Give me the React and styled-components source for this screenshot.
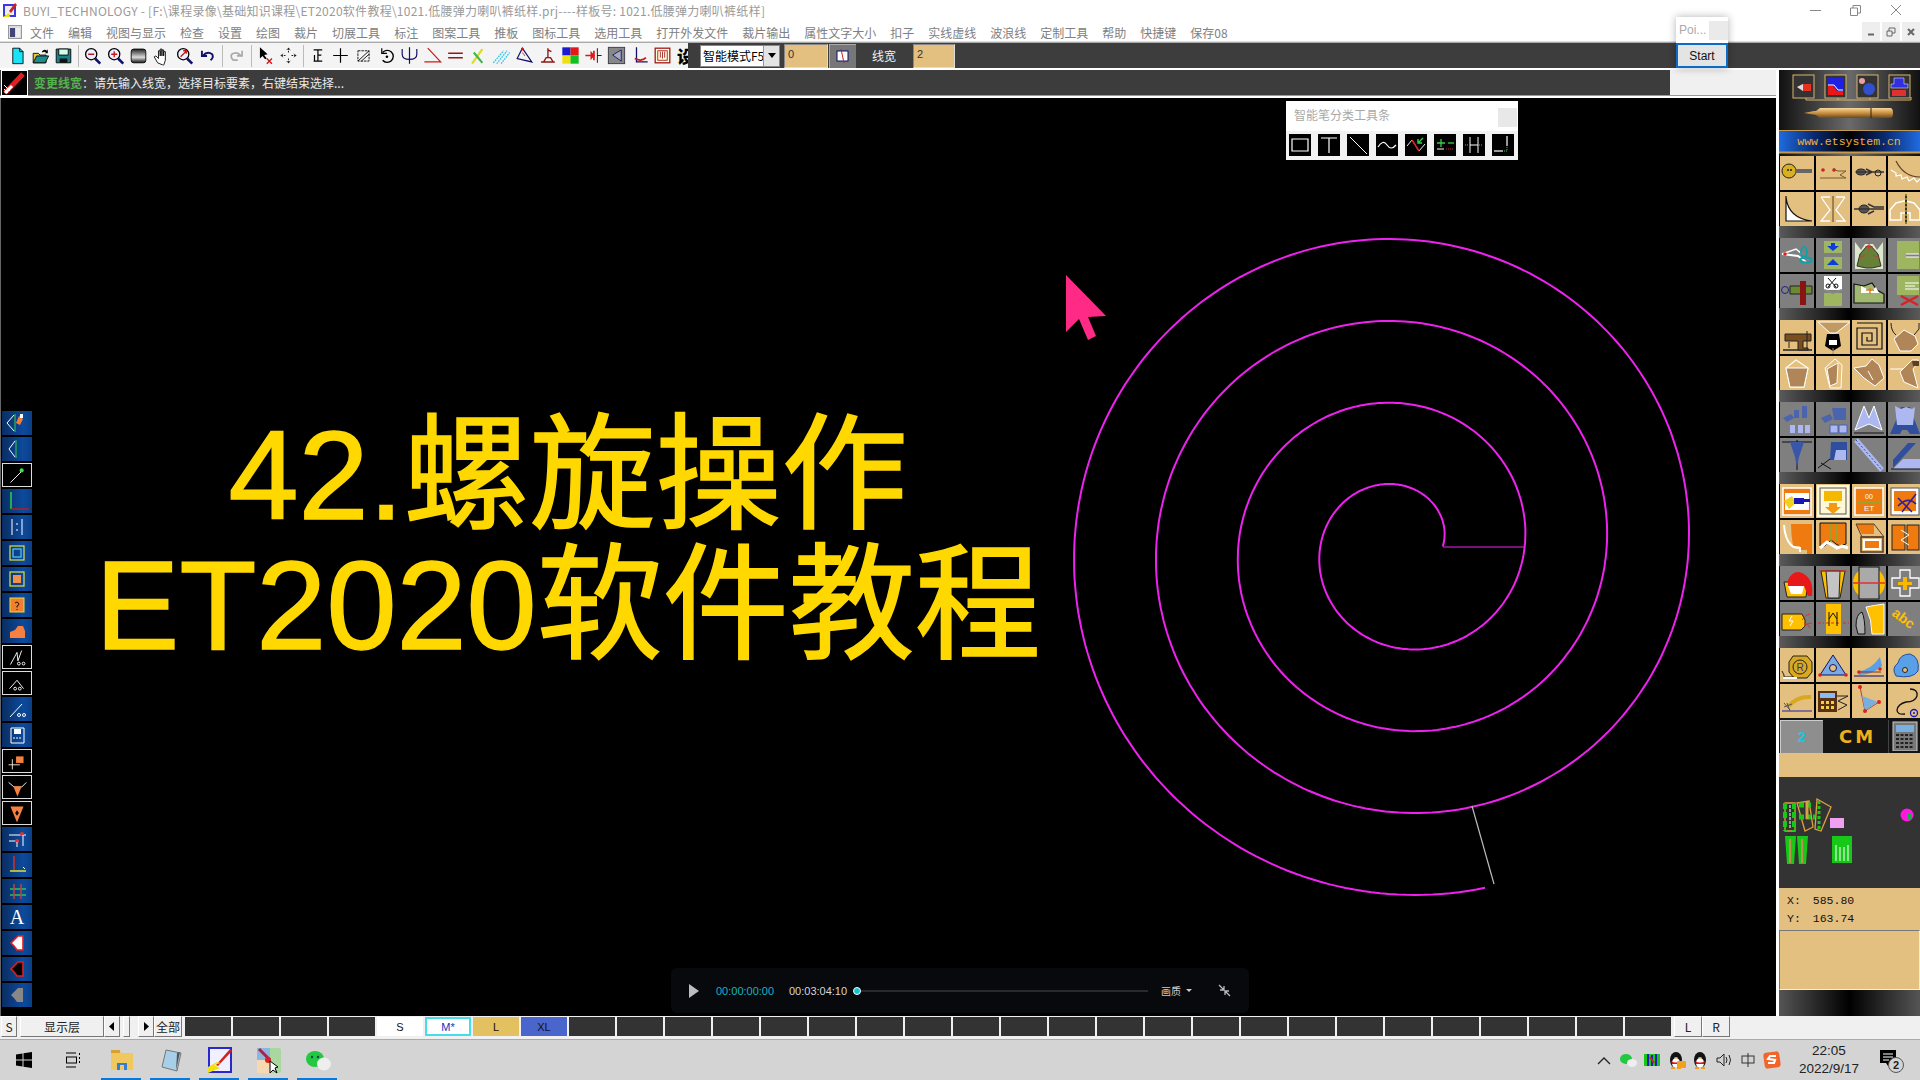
import React from 'react'
import styled, { createGlobalStyle } from 'styled-components'

const Global = createGlobalStyle`
  html, body { margin: 0; padding: 0; background: #f0f0f0; overflow: hidden; }
  * { box-sizing: border-box; }
`
const cjk = `"Noto Sans CJK SC", "Liberation Sans", sans-serif`
const tan = '#e3bf80'

const Page = styled.div`
  width: 1920px; height: 1080px; display: flex; flex-direction: column;
  position: relative; overflow: hidden; font-family: ${cjk}; background: #f0f0f0;
`
const TitleBar = styled.div`
  height: 22px; background: #fff; display: flex; align-items: center;
  padding: 0 0 2px 2px; color: #9a9a9a; font-size: 12px; gap: 5px; white-space: nowrap; letter-spacing: .26px;
`
const WindowButtons = styled.div`
  margin-left: auto; display: flex; width: 130px; height: 22px; align-items: center;
  justify-content: space-between; padding: 0 18px 0 20px;
`
const MenuBar = styled.div`
  height: 20px; background: #fff; display: flex; align-items: center; padding-left: 8px;
`
const MenuList = styled.div`
  display: flex; gap: 14px; margin-left: 8px; font-size: 12px; color: #808080; white-space: nowrap;
`
const MdiButtons = styled.div`
  margin-left: auto; display: flex; gap: 2px; height: 20px;
`
const MdiButton = styled.div`
  width: 18px; height: 20px; background: #eee; display: flex; align-items: center; justify-content: center;
`
const Toolbar = styled.div`
  height: 28px; display: flex; background: #f3f3f3; border-top: 1px solid #aaa; border-bottom: 2px solid #fff;
  box-shadow: 0 -1px 0 #ddd;
`
const ToolIcons = styled.div`
  width: 688px; display: flex; align-items: center; padding-left: 6px; background: #f4f4f4;
`
const ToolIcon = styled.div`
  width: 23px; height: 23px; flex: none; display: flex; align-items: center; justify-content: center;
  svg { transform: scale(.86); }
`
const ToolSep = styled.div`
  width: 6px; height: 22px; flex: none;
  &::after { content: ''; display: block; width: 1px; height: 22px; margin-left: 3px; background: #bbb; }
`
const BigGlyph = styled.span`
  font-size: 17px; font-weight: 900; color: #000; line-height: 1;
`
const DarkTools = styled.div`
  flex: 1; background: #3d3d3d; display: flex; align-items: center; padding-left: 0; color: #eee; font-size: 12px;
`
const Combo = styled.div`
  width: 80px; height: 22px; background: #fff; color: #000; font-size: 12px; display: flex; align-items: center;
  padding-left: 2px; margin-left: 12px; position: relative; white-space: nowrap; overflow: hidden;
  border: 1px solid #888;
`
const ComboArrow = styled.div`
  position: absolute; right: 0; top: 0; width: 16px; height: 20px; background: #e4e4e4; border-left: 1px solid #999;
  display: flex; align-items: center; justify-content: center;
  &::after { content: ''; border: 4px solid transparent; border-top: 5px solid #000; margin-top: 4px; }
`
const TanInput = styled.div`
  width: ${p => p.$w}px; height: 24px; background: ${tan}; border: 1px solid #999; border-color: #888 #ddd #ddd #888; color: #333;
  font-size: 11px; padding: 2px 3px; margin-left: ${p => p.$ml}px; line-height: 14px; font-family: "Liberation Sans", sans-serif;
`
const GrayToggle = styled.div`
  width: 27px; height: 24px; background: #777; margin-left: 1px; border-top: 1px solid #aaa; border-left: 1px solid #aaa; display: flex; align-items: center; justify-content: center;
`
const WidthLabel = styled.div`
  margin-left: 16px; width: 41px; font-size: 12px; color: #f2f2f2;
`
const Body = styled.div`
  height: 946px; display: flex;
`
const Work = styled.div`
  width: 1777px; display: flex; flex-direction: column; border-right: 1px solid #fff;
`
const StatusBar = styled.div`
  height: 28px; display: flex; align-items: stretch; background: #f0f0f0; border-bottom: 2px solid #fff;
  box-shadow: inset 0 -1px 0 #999;
`
const StatusDark = styled.div`
  width: 1670px; background: #3c3c3c; display: flex; align-items: center; font-size: 12px; color: #eaeaea;
  margin-bottom: 1px;
`
const StatusIcon = styled.div`
  width: 27px; height: 26px; margin: 0 6px 0 1px; background: #000; border: 1px solid #fff; flex: none;
  display: flex;
`
const StatusKey = styled.span`
  color: #54b24f; font-weight: 700;
`
const Canvas = styled.div`
  flex: 1; background: #000; position: relative; display: flex; align-items: flex-end;
  border-left: 1px solid #666; padding: 0 0 9px 1px;
`
const LeftStrip = styled.div`
  display: flex; flex-direction: column; gap: 2px; width: 30px; position: relative;
`
const StripButton = styled.div`
  width: 30px; height: 24px; display: flex;
  background: ${p => p.$black ? '#000' : 'linear-gradient(90deg,#0a2d62,#0c4a9c 70%,#0b3f86)'};
  border: ${p => p.$black ? '1px solid #ddd' : 'none'};
`
const SpiralLayer = styled.svg`
  position: absolute; left: 0; top: 0; width: 1776px; height: 918px;
`
const Headline = styled.div`
  position: absolute; left: 0; top: 313px; width: 1134px; text-align: center; color: #ffd800;
  font-family: "Liberation Sans", "Noto Sans CJK SC", sans-serif; font-size: 126px; line-height: 130px;
  white-space: nowrap; -webkit-text-stroke: 1.5px #ffd800;
`
const PenPanel = styled.div`
  position: absolute; left: 1285px; top: 3px; width: 232px; height: 59px; background: #f2f2f2;
`
const PenTitle = styled.div`
  height: 30px; background: #fff; color: #a9a9a9; font-size: 12px; display: flex; align-items: center; padding: 0 0 3px 8px; position: relative;
`
const PenClose = styled.div`
  position: absolute; right: 1px; top: 7px; width: 19px; height: 19px; background: #e8e8e8;
`
const PenTools = styled.div`
  display: flex; gap: 7px; padding: 3px 0 0 3px;
`
const PenTool = styled.div`
  width: 22px; height: 22px; background: #000; display: flex;
`
const Player = styled.div`
  position: absolute; left: 670px; top: 870px; width: 578px; height: 45px; background: #08090c; border-radius: 6px;
  display: flex; align-items: center; padding-left: 18px; font-size: 11px; color: #d5d5d5; font-family: "Liberation Sans", sans-serif;
`
const PlayTriangle = styled.div`
  width: 0; height: 0; border-left: 10px solid #bdbdbd; border-top: 7px solid transparent; border-bottom: 7px solid transparent;
`
const TimeNow = styled.span`
  color: #12b4c2; margin-left: 17px; width: 73px;
`
const TimeAll = styled.span`
  width: 57px; white-space: nowrap;
`
const Knob = styled.div`
  width: 8px; height: 8px; border-radius: 50%; background: #12c3d0; border: 1.5px solid #fff; flex: none; margin-left: 7px;
`
const Track = styled.div`
  width: 287px; height: 2px; background: #2a2a2a;
`
const Quality = styled.span`
  margin-left: 13px; font-family: ${cjk}; font-size: 10px; color: #ccc;
`
const Caret = styled.div`
  margin-left: 5px; border: 3px solid transparent; border-top: 3px solid #ccc; margin-top: 3px;
`
const Panel = styled.div`
  width: 143px; background: #000; overflow: hidden; display: flex; flex-direction: column; border-left: 2px solid #fff; padding-left: 0;
`
const PanelHead = styled.div`
  height: 86px; flex: none; background: linear-gradient(90deg,#111,#6a6a6a 50%,#111);
  display: flex; flex-direction: column;
`
const Band = styled.div`
  height: 12px; flex: none; background: linear-gradient(90deg,#5a5a5a,#000 50%,#5a5a5a);
`
const IconGrid = styled.div`
  display: grid; grid-template-columns: repeat(4, 34px); grid-auto-rows: 34px; gap: 2px; padding-left: 1px; height: 70px; flex: none; background: #000;
`
const IconCell = styled.div`
  background: ${p => p.$tone === 'gray' ? '#7f7f7f' : tan}; display: flex;
`
const BottomRow = styled.div`
  height: 35px; flex: none; display: flex; padding: 2px 0 0 1px; background: #141414;
`
const UnitKey = styled.div`
  width: 43px; background: #8e8e8e; color: #19c7e0; border: 1px solid #ccc; border-bottom: 0; border-right: 0;
  font-size: 14px; font-weight: 700; display: flex; align-items: center; justify-content: center; font-family: "Liberation Sans", sans-serif;
`
const UnitName = styled.div`
  width: 66px; color: #f0b01c; font-family: "DejaVu Sans", sans-serif; font-size: 18px; font-weight: 700; letter-spacing: 3px; border-right: 1px solid #444;
  display: flex; align-items: center; justify-content: center; padding-left: 4px;
`
const Calc = styled.div`
  width: 30px; padding-left: 3px; display: flex;
`
const TanBand = styled.div`
  height: 24px; flex: none; background: ${tan};
`
const Preview = styled.div`
  height: 111px; flex: none; background: #333; display: flex;
`
const Coords = styled.div`
  height: 42px; flex: none; background: ${tan}; padding: 4px 0 0 8px; font-family: "Liberation Mono", monospace; font-size: 11.5px; line-height: 18px; color: #111;
`
const CoordRow = styled.div`
  display: flex; gap: 12px;
`
const Inset = styled.div`
  height: 60px; flex: none; background: ${tan}; border: 1px solid; border-color: #777 #eee #eee #777;
`
const PanelFoot = styled.div`
  flex: 1; background: linear-gradient(90deg,#555,#000 50%,#555);
`
const LayerBar = styled.div`
  height: 22px; display: flex; align-items: stretch; padding: 0 0 1px 1px; background: #f0f0f0; font-size: 12px;
`
const LayerButton = styled.div`
  width: ${p => p.$w}px; margin-left: ${p => p.$ml || 0}px; border: 1px solid; border-color: #fff #777 #777 #fff; background: #f0f0f0; color: #222;
  display: flex; align-items: center; justify-content: center; flex: none;
`
const SizeCells = styled.div`
  display: flex; gap: 2px; margin-left: 3px; padding: 1px 0;
`
const SizeCell = styled.div`
  width: 46px; background: ${p => p.$bg || '#333'}; color: ${p => p.$fg || '#111'}; font-size: 11px;
  border: ${p => p.$outline ? '2px solid #46dcec' : 'none'};
  display: flex; align-items: center; justify-content: center; font-family: "Liberation Sans", sans-serif;
`
const Taskbar = styled.div`
  height: 41px; margin-top: 1px; border-top: 1px solid #aaa; background: #d4d4d4; display: flex; position: relative; align-items: center;
`
const TaskSlot = styled.div`
  width: ${p => p.$w || 49}px; height: 40px; display: flex; align-items: center; justify-content: center; flex: none; position: relative;
  ${p => p.$open ? `&::after { content: ''; position: absolute; left: 4px; right: 5px; bottom: 0; height: 2px; background: #0a78d4; }` : ''}
`
const Tray = styled.div`
  margin-left: auto; display: flex; align-items: center; height: 40px;
`
const TrayIcon = styled.div`
  width: 24px; display: flex; justify-content: center; align-items: center;
`
const Clock = styled.div`
  width: 78px; margin-left: 6px; text-align: center; font-size: 13.5px; line-height: 18px; color: #222; font-family: "Liberation Sans", sans-serif;
`
const Notify = styled.div`
  width: 34px; margin: 0 13px 0 5px; height: 30px; display: flex;
`
const PoiBox = styled.div`
  position: absolute; left: 1676px; top: 17px; width: 52px; height: 51px; background: #fff; box-shadow: 0 0 8px rgba(0,0,0,.3); z-index: 3;
  display: flex; flex-direction: column;
`
const PoiTitle = styled.div`
  height: 26px; display: flex; align-items: center; padding-left: 3px; font-size: 12px; color: #aaa; font-family: "Liberation Sans", sans-serif; justify-content: space-between;
`
const PoiClose = styled.div`
  width: 19px; height: 19px; background: #eaeaea;
`
const StartButton = styled.div`
  flex: 1; border: 2px solid #0a6cc4; background: #e4e4e4; font-size: 12px; color: #111; display: flex; align-items: center; justify-content: center; font-family: "Liberation Sans", sans-serif;
`

const menus = ['文件','编辑','视图与显示','检查','设置','绘图','裁片','切展工具','标注','图案工具','推板','图标工具','选用工具','打开外发文件','裁片输出','属性文字大小','扣子','实线虚线','波浪线','定制工具','帮助','快捷键','保存08']

const Svg = ({ s = 34, w, h, children }) => (
  <svg width={w || s} height={h || s} viewBox={`0 0 ${w || s} ${h || s}`} fill="none" style={{ display: 'block' }}>{children}</svg>
)

const Mag = ({ sign }) => (
  <Svg s={23}>
    <circle cx="10" cy="10" r="6.5" fill="#eef" stroke="#000" strokeWidth="1.5" />
    <path d="M14.5 15l6 6" stroke="#11116a" strokeWidth="3" />
    <path d={sign === '+' ? 'M6.5 10h7M10 6.5v7' : sign === '-' ? 'M6.5 10h7' : 'M7 13l6-6M10 6h3.5v3.5'} stroke="#c01818" strokeWidth="1.6" />
  </Svg>
)

const toolIcons = [
  <Svg s={23}><path d="M6 3h8l4 4v14H6z" fill="#19e3f5" stroke="#000" /><path d="M14 3v4h4" stroke="#000" /></Svg>,
  <Svg s={23}><path d="M3 9h6l2 2h7v9H3z" fill="#e9c74a" stroke="#000" /><path d="M3 20l4-8h14l-4 8z" fill="#1f8c8c" stroke="#000" /><path d="M13 7q3-4 6-1l1-2v5h-4l2-1q-2-2-4 0" fill="#000" /></Svg>,
  <Svg s={23}><path d="M3 4h17v16H3z" fill="#1c7f86" stroke="#000" /><path d="M6 4h11v7H6z" fill="#cfe" stroke="#000" /><path d="M7 15h9v5H7z" fill="#111" /></Svg>,
  'sep',
  <Mag sign="-" />, <Mag sign="+" />,
  <Svg s={23}><defs><linearGradient id="gr" x1="0" y1="0" x2="0" y2="1"><stop offset="0" stopColor="#222" /><stop offset=".6" stopColor="#ddd" /><stop offset="1" stopColor="#111" /></linearGradient></defs><rect x="3" y="4" width="17" height="16" rx="3" fill="url(#gr)" stroke="#000" /></Svg>,
  <Svg s={23}><path d="M7 20l-4-7 2-1 3 3V6l2 0v6-8h2v8-7h2v7-5h2v10l-2 6z" fill="#fff" stroke="#000" strokeWidth="1" /></Svg>,
  <Mag sign="a" />,
  <Svg s={23}><path d="M5 6v6h6" stroke="#11116a" strokeWidth="2.2" /><path d="M6 12q5-6 11-2 2 4-2 7" stroke="#11116a" strokeWidth="2.2" /></Svg>,
  'sep',
  <Svg s={23}><path d="M18 6v6h-6" stroke="#aaa" strokeWidth="2" /><path d="M17 12q-5-6-11-2-2 4 2 7h5" stroke="#aaa" strokeWidth="2" /></Svg>,
  'sep',
  <Svg s={23}><path d="M5 2l0 13 3-3 3 4 2-1-3-4 4-1z" fill="#000" /><path d="M13 15l6 6M19 15l-6 6" stroke="#d01818" strokeWidth="1.6" /></Svg>,
  <Svg s={23}><path d="M11.5 3v5M11.5 15v5M3 11.5h5M15 11.5h5" stroke="#000" strokeDasharray="2 1" /><path d="M9.5 5l2-2 2 2M9.5 18l2 2 2-2M5 9.5l-2 2 2 2M18 9.5l2 2-2 2" stroke="#000" /></Svg>,
  'sep',
  <Svg s={23}><path d="M7 5h10M12 5v13M7 18h10M12 11h4M8 11v7" stroke="#000" strokeWidth="1.4" /></Svg>,
  <Svg s={23}><path d="M11.5 3v17M3 11.5h17" stroke="#000" strokeWidth="1.4" /></Svg>,
  <Svg s={23}><path d="M5 6h13v12H5z" stroke="#000" strokeDasharray="3 1" /><path d="M5 18L18 6M9 18l9-8" stroke="#000" /></Svg>,
  <Svg s={23}><path d="M7 8a7 7 0 1 1 0 9" stroke="#000" strokeWidth="1.6" /><path d="M6 3v6h6" stroke="#000" strokeWidth="1.4" /><circle cx="12" cy="13" r="1.5" fill="#000" /></Svg>,
  <Svg s={23}><path d="M11.5 2v19M3 4v6q0 6 8.500 6 8.500 0 8.500-6V4" stroke="#11116a" strokeWidth="1.4" /></Svg>,
  <Svg s={23}><path d="M2 19h19L6 3" stroke="#d01818" strokeWidth="1.4" /></Svg>,
  <Svg s={23}><path d="M3 9h17M3 14h17" stroke="#8b1a1a" strokeWidth="1.8" /></Svg>,
  <Svg s={23}><path d="M4 21L16 4" stroke="#dddd20" strokeWidth="2.6" /><path d="M6 8l10 12" stroke="#39b54a" strokeWidth="2.4" /></Svg>,
  <Svg s={23}><path d="M2 20L14 6M6 21L18 6M11 21L21 8" stroke="#38c6ea" strokeWidth="1.6" strokeDasharray="2 1" /></Svg>,
  <Svg s={23}><path d="M9 3l11 16-17-4z" stroke="#11116a" strokeWidth="1.4" /><circle cx="9" cy="4" r="1.6" fill="#d01818" /><path d="M9 8l3 4" stroke="#d01818" /></Svg>,
  <Svg s={23}><path d="M4 19h16M7 19l3-5h5l3 5M12 3v11M12 5l4 2" stroke="#8b1a1a" strokeWidth="1.6" /></Svg>,
  <Svg s={23}><rect x="2" y="2" width="9.500" height="9.500" fill="#1a1ad0" /><rect x="11.500" y="2" width="9.500" height="9.500" fill="#e01818" /><rect x="2" y="11.500" width="9.500" height="9.500" fill="#f0e010" /><rect x="11.500" y="11.500" width="9.500" height="9.500" fill="#10c020" /></Svg>,
  <Svg s={23}><path d="M2 11.500h10M12 6v11" stroke="#e01818" strokeWidth="2" /><path d="M8 6l5 5.500-5 5.500z" fill="#e01818" /><path d="M16 3v17M16 11.500h5" stroke="#000" /></Svg>,
  <Svg s={23}><rect x="2" y="2" width="19" height="19" fill="#888" stroke="#334" /><path d="M17 5v13L7 11z" stroke="#11116a" fill="#aab" /></Svg>,
  <Svg s={23}><path d="M8 2v17h13" stroke="#11116a" strokeWidth="1.5" /><path d="M6 15q8 4 13-1" stroke="#d01818" strokeWidth="2" /></Svg>,
  <Svg s={23}><rect x="3" y="3" width="17" height="17" fill="#ffd" stroke="#a01818" strokeWidth="1.5" /><rect x="6" y="6" width="11" height="11" stroke="#a01818" /><path d="M9 7v7M11.500 7v8M14 7v7" stroke="#a01818" /></Svg>,
  'big',
]

const leftIcons = [
  [<path d="M12 4L5 12l7 8" stroke="#fff" />, <path d="M13 3v18" stroke="#2fd14a" />, <path d="M17 5l4 3-3 6-4-2z" fill="#f08030" />, <path d="M18 3h3v4h-3z" fill="#fff" />],
  [<path d="M13 4L7 12l6 8" stroke="#fff" />, <path d="M14 3v18" stroke="#2fd14a" />],
  [<path d="M8 19L20 7" stroke="#fff" />, <circle cx="20" cy="6" r="2.200" fill="#3fe03f" />],
  [<path d="M9 3v17" stroke="#2fd14a" strokeWidth="1.500" />, <path d="M9 20h18" stroke="#b02020" strokeWidth="1.500" />],
  [<path d="M10 4v16M20 4v16" stroke="#fff" />, <path d="M15 8v2M15 14v2" stroke="#fff" />],
  [<rect x="8" y="5" width="14" height="14" stroke="#e0e040" strokeWidth="1.200" />, <rect x="11" y="8" width="8" height="8" stroke="#5fc8f0" strokeWidth="1.200" />],
  [<rect x="8" y="5" width="14" height="14" stroke="#e0e040" strokeWidth="1.200" />, <rect x="11" y="8" width="8" height="8" fill="#f09050" />],
  [<rect x="8" y="5" width="14" height="14" fill="#f08030" stroke="#e0e040" />, <path d="M13 10q2-2 3.500 0t-1.500 3v1.500M15 16v1" stroke="#111" />],
  [<path d="M8 19v-6l5-2 3-4h5l2 5v7z" fill="#f58040" />],
  [<path d="M8 19L15 6l1 9 4-11" stroke="#fff" />, <circle cx="17" cy="18" r="1.500" stroke="#fff" />, <circle cx="22" cy="18" r="1.500" stroke="#fff" />],
  [<path d="M7 17l8-9 7 9" stroke="#fff" />, <circle cx="13" cy="17" r="1.500" stroke="#fff" />, <circle cx="18" cy="17" r="1.500" stroke="#fff" />],
  [<path d="M8 20L20 7" stroke="#fff" />, <circle cx="17" cy="18" r="1.500" stroke="#fff" />, <circle cx="22" cy="18" r="1.500" stroke="#fff" />],
  [<path d="M9 5h13v15H9z" stroke="#fff" />, <rect x="12" y="6" width="7" height="5" fill="#fff" />, <path d="M11 15h9" stroke="#fff" strokeDasharray="2 1" />],
  [<rect x="14" y="6" width="8" height="7" fill="#f58040" />, <path d="M10 9v11M6 15h12" stroke="#f0e8d0" />],
  [<path d="M6 6l6 5h8l5-5" stroke="#fff" />, <path d="M11 10h9l-4.500 11z" fill="#f58040" />],
  [<path d="M8 4h14l-7 17z" fill="#f58040" />, <path d="M15 8l2 3-2 3-2-3z" fill="#000" />],
  [<path d="M7 8h17M7 14h10" stroke="#fff" />, <circle cx="20" cy="7" r="2" fill="#e03030" />, <circle cx="15" cy="14" r="2" fill="#e03030" />, <path d="M21 8v11M15 15v5" stroke="#fff" />],
  [<path d="M12 3v14" stroke="#d03030" strokeWidth="1.500" />, <path d="M8 18h16" stroke="#e0e030" strokeWidth="1.500" />, <path d="M21 14l2 2" stroke="#fff" />],
  [<path d="M8 10h16M8 16h16" stroke="#35c050" strokeWidth="1.500" />, <path d="M12 5v15M19 5v15" stroke="#c04040" strokeWidth="1.500" />],
  [<text x="15" y="19" fill="#fff" fontSize="20" textAnchor="middle" fontFamily="Liberation Serif, serif">A</text>],
  [<path d="M9 12l7-7h5v14h-6l-3-4z" fill="#fff" stroke="#e02020" strokeWidth="1.600" />],
  [<path d="M9 12l7-7h5v14h-6l-3-4z" fill="#000" stroke="#e02020" strokeWidth="1.600" />],
  [<path d="M9 12l7-7h5v14h-6l-3-4z" fill="#888" />],
]
const blackLeft = [2, 9, 10, 13, 14, 15]

const rightGroups = [
  { tone: 'tan', icons: [
    <><circle cx="9" cy="15" r="7" fill="#d8b020" stroke="#222" /><path d="M15 15h17" stroke="#666" strokeWidth="4" /><circle cx="8" cy="14" r="1" fill="#222" /><circle cx="11" cy="14" r="1" fill="#222" /></>,
    <><circle cx="7" cy="14" r="1.800" fill="#d02020" /><circle cx="18" cy="14" r="1.800" fill="#d02020" /><path d="M4 22h26l-6-3 6-4h-8q-3 0-4-3" stroke="#7a5a30" /></>,
    <><ellipse cx="9" cy="16" rx="5" ry="3" fill="#555" stroke="#222" /><path d="M5 16h27M14 13l6 3h8M14 19l6-3" stroke="#333" strokeWidth="1.500" /><circle cx="26" cy="17" r="3" stroke="#222" /></>,
    <><path d="M8 5q8 16 24 16" stroke="#5a4020" strokeWidth="1.200" /><path d="M3 14l5 3 0 3 5-1 1 4 5-2 2 4 5-3 3 4 3-3" stroke="#fff" strokeWidth="1.200" /></>,
    <><path d="M6 5q2 21 22 24H6z" fill="#fff" /><path d="M6 4v25h26M6 5q2 21 26 24" stroke="#111" strokeWidth="1.200" /></>,
    <><path d="M17 4v26" stroke="#5a4020" /><path d="M5 5l9 13-9 11h9M29 5l-9 13 9 11h-9M5 5h9M29 5h-9" stroke="#fff" strokeWidth="1.300" /></>,
    <><ellipse cx="12" cy="17" rx="5" ry="4" fill="#555" stroke="#222" /><path d="M2 17h30M16 12l6 3h10M16 22l6-3" stroke="#333" strokeWidth="1.500" /></>,
    <><path d="M2 28V18l6-7 8-2h2l8 2 6 7v10H22v-7h-9v7z" stroke="#fff" strokeWidth="1.500" /><path d="M18 2v30" stroke="#333" strokeWidth="2" /><path d="M18 2v30" stroke="#e0d020" strokeDasharray="2 2" /></>,
  ]},
  { tone: 'gray', icons: [
    <><path d="M2 16l16 2 8 6" stroke="#fff" strokeWidth="2" /><path d="M2 16l14-5 6 5" stroke="#fff" strokeWidth="1.500" /><ellipse cx="26" cy="22" rx="6" ry="2.500" stroke="#12a0a8" strokeWidth="2" /><ellipse cx="24" cy="14" rx="3" ry="5" stroke="#12a0a8" strokeWidth="2" /><circle cx="5" cy="16" r="1.800" fill="#e02020" /></>,
    <><rect x="8" y="3" width="18" height="12" fill="#9eb660" /><rect x="8" y="19" width="18" height="12" fill="#9eb660" /><path d="M17 13l-6-5h4V5h4v3h4zM17 21l-6 6h12z" fill="#0c3ce0" /></>,
    <><path d="M3 4l6 8 4-6h8l4 6 6-8v27H3z" fill="#dde8cc" /><path d="M5 28l3-12 7-8h4l7 8 3 12-9 2h-6z" fill="#668038" stroke="#333" /><path d="M17 5v8M13 9h8M7 20l6-3M27 20l-6-3" stroke="#e03030" /></>,
    <><path d="M9 3h22v13H18v3h13v12H9z" fill="#9eb660" /><path d="M18 16h13M18 19h13" stroke="#fff" /></>,
    <><circle cx="5" cy="16" r="3.500" stroke="#20208a" /><path d="M10 12h22v8H10z" fill="#6a8a30" stroke="#222" /><path d="M20 7h6v24h-6z" fill="#8a1414" /></>,
    <><rect x="8" y="2" width="18" height="14" fill="#fff" /><rect x="8" y="19" width="18" height="13" fill="#9eb660" /><path d="M8 16l9 3 9-3" stroke="#888" strokeWidth="2" /><path d="M12 4l8 9M20 4l-8 9" stroke="#111" /><circle cx="12" cy="12" r="2" stroke="#111" /><circle cx="20" cy="12" r="2" stroke="#111" /></>,
    <><path d="M2 10l10 2 8-3 5 7 7 4v9H2z" fill="#a0b870" stroke="#111" strokeWidth="1.200" /><path d="M9 12l10 5 5-4 3 6-18 0z" fill="#fff" /><path d="M14 16h8M18 14v6" stroke="#d88020" strokeWidth="1.500" /></>,
    <><path d="M9 2h22v19H9z" fill="#9eb660" /><path d="M17 9h14M17 12h10M17 15h14" stroke="#fff" /><path d="M13 22l17 9M30 22l-17 9" stroke="#e02020" strokeWidth="2.500" /></>,
  ]},
  { tone: 'tan', icons: [
    <><path d="M3 30h29" stroke="#222" strokeWidth="1.500" /><path d="M5 14h26v7h-8v7h5v2H18V21H5z" fill="#7a4f20" stroke="#222" /><path d="M9 22v6M27 11v18" stroke="#222" /></>,
    <><path d="M2 2h32L20 13h-6z" fill="#c09a60" stroke="#fff" /><path d="M11 14h12l2 12-8 5-8-5z" fill="#000" /><path d="M13 20h8v5h-8z" fill="#fff" /><path d="M17 28v6" stroke="#a88" /></>,
    <><path d="M5 3h25v26H5V8h20v17H10V13h10v8h-5v-4" stroke="#111" strokeWidth="1.200" /></>,
    <><path d="M3 3q0 8 5 12M31 3v6l-5 6" stroke="#222" /><path d="M6 19l10-9 11 6 3 8-7 7H12z" fill="#b08658" stroke="#fff" /></>,
    <><path d="M6 12L16 4l12 8-4 19H10z" stroke="#fff" strokeWidth="1.200" /><path d="M6 12h22l-4 19H10z" fill="#b08658" stroke="#fff" /></>,
    <><path d="M9 12l10-9 7 6-1 23H14z" stroke="#fff" /><path d="M11 13l11-6-1 20-7 3z" fill="#b08658" stroke="#fff" /></>,
    <><path d="M2 12l12-2 6-7 7 6 5 13-9 8L12 22z" fill="#b08658" stroke="#fff" /><path d="M16 15l5 9" stroke="#fff" /></>,
    <><path d="M2 13h15" stroke="#fff" /><path d="M12 16l12-12h6v3l-5 6 5 19-14-6z" fill="#b08658" stroke="#fff" /><path d="M24 5h7v5h-6z" fill="#5a4020" /></>,
  ]},
  { tone: 'gray', icons: [
    <><path d="M3 16l8-4 3 4-7 4zM14 8h5v8h-5zM22 4h5v12h-5" fill="#4a64ae" /><path d="M10 23h5v8h-5zM18 23h5v8h-5zM25 23h5v8h-5z" fill="#aeb8f0" /></>,
    <><path d="M5 16l9-4 3 5-8 4zM16 6h14v12H18z" fill="#4a64ae" /><path d="M14 23h8v8h-8zM23 23h8v8h-8z" fill="#aeb8f0" stroke="#4a64ae" /></>,
    <><path d="M3 28L12 4l5 12 5-12 8 24-13-6z" fill="#aeb8f0" stroke="#fff" /><path d="M2 31h30" stroke="#111" /></>,
    <><path d="M2 32L10 14l3-9h9l3 9 7 18H22l-3-4h-5l-2 4z" fill="#2f4f9e" /><path d="M7 4l6 3 5-2 6 2 3-2-2 18H9z" fill="#aeb8f0" /></>,
    <><path d="M2 4h30M17 2v30" stroke="#111" /><path d="M10 4h14l-5 15-2 10-2-10z" fill="#3a56a8" /></>,
    <><path d="M2 30l16-12 13-12M5 25l10 6" stroke="#111" /><path d="M15 4h16v18H14z" fill="#2f4f9e" /><path d="M20 12h10v10H18z" fill="#aeb8f0" /></>,
    <><path d="M4 2l26 30" stroke="#aeb8f0" strokeWidth="5" /><path d="M4 2l26 30" stroke="#2f4f9e" strokeDasharray="2 2" /></>,
    <><path d="M5 30L28 5l-8 0L5 22z" fill="#2f4f9e" /><path d="M15 21h17v10H5z" fill="#aeb8f0" /><path d="M3 31h30" stroke="#111" /></>,
  ]},
  { tone: 'tan', icons: [
    <><rect x="3" y="4" width="28" height="27" fill="#ee7a10" stroke="#fff" strokeWidth="1.500" /><rect x="5" y="9" width="24" height="17" fill="#fff" /><path d="M4 17l8-5 4 7-7 6z" fill="#f0d020" /><path d="M14 14h10v6H14zM24 15h6v3h-6z" fill="#1818b0" /></>,
    <><rect x="1" y="1" width="32" height="32" fill="#fff8d8" /><rect x="4" y="4" width="26" height="26" stroke="#555" /><rect x="8" y="7" width="18" height="10" fill="#f5b800" /><path d="M13 19h8v4h4l-8 7-8-7h4z" fill="#f59a10" /></>,
    <><rect x="3" y="4" width="28" height="27" fill="#ee7a10" stroke="#fff" strokeWidth="1.500" /><path d="M5 18h24" stroke="#80b030" strokeWidth="1.500" /><text x="17" y="27" fill="#fff" fontSize="8" textAnchor="middle" fontFamily="Liberation Sans">ET</text><text x="17" y="15" fill="#fff" fontSize="7" textAnchor="middle" fontFamily="Liberation Sans">00</text></>,
    <><rect x="3" y="4" width="28" height="27" fill="#fff" stroke="#555" /><rect x="6" y="7" width="22" height="20" fill="#ee7a10" /><path d="M10 14l14 14M28 10L14 28M10 22q10-10 18-2" stroke="#3020a0" strokeWidth="1.600" /></>,
    <><path d="M11 4h21v30H27v-4h-7v-4H13q-2-12-2-22z" fill="#ee7a10" /><path d="M4 5q1 14 7 20 3 3 9 3v4" stroke="#fff" strokeWidth="2" /></>,
    <><path d="M4 3h26v21l-6 2-4-2-5-4-6 6H4z" fill="#ee7a10" stroke="#111" /><path d="M15 4v18M20 4v18" stroke="#80b030" strokeWidth="1.500" strokeDasharray="3 1" /><path d="M4 28l7-6 5 3 5 3 5-2 6 2" stroke="#fff" strokeWidth="3" /></>,
    <><path d="M4 4h18v10H10z" fill="#ee7a10" /><path d="M4 4h18l10 13H10z" stroke="#5a3a2a" /><rect x="9" y="17" width="22" height="15" stroke="#5a3a2a" strokeWidth="1.500" /><rect x="11" y="19" width="18" height="11" fill="#fff" /><rect x="13" y="21" width="14" height="7" fill="#ee7a10" /></>,
    <><rect x="4" y="5" width="13" height="25" fill="#ee7a10" stroke="#222" /><rect x="19" y="5" width="12" height="25" fill="#ee7a10" stroke="#222" /><path d="M13 10l8 5-8 5 8 5" stroke="#fff" /></>,
  ]},
  { tone: 'gray', icons: [
    <><path d="M4 16h24l-2 15H7z" fill="#ffc000" stroke="#222" /><path d="M8 20h16l-2 8H11z" fill="#fff" /><path d="M8 14q6-12 16-6t8 22h-4l-4-10H8z" fill="#e81818" /></>,
    <><path d="M5 5h24l-5 27H10z" fill="#ffc000" stroke="#222" /><path d="M10 5h14l-1 27H12z" fill="#c4c4c4" stroke="#222" /><path d="M3 5h28" stroke="#e03030" /></>,
    <><ellipse cx="17" cy="17" rx="16" ry="16" fill="#ffc000" /><rect x="7" y="1" width="20" height="32" fill="#aaa" stroke="#111" /><path d="M1 17h32" stroke="#e03030" strokeWidth="1.500" /></>,
    <><path d="M12 4h10v8h9v10h-9v8H12v-8H4V12h8z" stroke="#fff" strokeWidth="1.300" /><path d="M15 16h-5v3h5v5h4v-5h5v-3h-5v-5h-4z" fill="#f8b800" /></>,
    <><path d="M2 12h20l3 6v6l-4 4H2z" fill="#ffc000" stroke="#222" /><path d="M12 14l-3 5 4 0-3 5" stroke="#fff" /><path d="M22 18q4-6 8-6M24 24q4-3 8-3M24 21q4 0 6 5" stroke="#e03030" /></>,
    <><rect x="10" y="2" width="15" height="30" fill="#ffc000" /><path d="M2 21h6M27 21h6M10 21h15" stroke="#d03030" strokeDasharray="3 2" /><path d="M13 10v14M21 10v14M13 17l4-6 4 6" stroke="#111" /></>,
    <><path d="M4 24q0-12 6-14 3 6 3 22H6z" fill="#aaa" stroke="#111" /><path d="M14 5q10-2 18-3v30H20q0-14-6-27z" fill="#ffc000" stroke="#fff" /></>,
    <><text x="15" y="21" fill="#ffc000" fontSize="14" fontWeight="700" textAnchor="middle" transform="rotate(38 15 17)" fontFamily="Liberation Sans">abc</text></>,
  ]},
  { tone: 'tan', icons: [
    <><path d="M13 8h14l5 6v10l-5 6H14l-5-6V14z" fill="#d8a820" stroke="#222" /><circle cx="20" cy="19" r="7" stroke="#222" /><text x="20" y="23" fill="#3030a0" fontSize="10" textAnchor="middle" fontFamily="Liberation Sans">R</text><path d="M2 23l2 4v2h10" stroke="#222" /><path d="M3 30h14" stroke="#fff" strokeWidth="2" /></>,
    <><path d="M17 7L30 27H4z" fill="#7aaae0" stroke="#11116a" /><circle cx="17" cy="20" r="3.500" fill={tan} stroke="#11116a" /><circle cx="4" cy="27" r="1.800" fill="#e02020" /><circle cx="30" cy="27" r="1.800" fill="#e02020" /></>,
    <><path d="M5 24q14-2 23-15l2 9q-10 9-23 9z" fill="#5aa0e8" /><path d="M7 24h22" stroke="#8a3010" /><path d="M2 28h30" stroke="#11116a" /><circle cx="7" cy="24" r="1.800" fill="#e02020" /><circle cx="28" cy="21" r="1.800" fill="#e02020" /></>,
    <><path d="M8 28Q3 20 10 15q2-9 12-9 10 3 8 17-5 8-22 5z" fill="#5aa0e8" stroke="#2050a0" /><circle cx="17" cy="22" r="2.500" fill={tan} stroke="#222" /></>,
    <><path d="M2 27h30" stroke="#2020a0" /><path d="M9 22q8-10 22-9" stroke="#d8a820" strokeWidth="4" /><path d="M4 23l8-3M7 19l3 8M4 19l6 7" stroke="#555" /></>,
    <><rect x="2" y="7" width="19" height="21" fill="#5a3010" /><rect x="4" y="9" width="15" height="5" fill="#88bbf0" /><path d="M5 17h3v3H5zM10 17h3v3h-3zM15 17h3v3h-3zM5 22h3v3H5zM10 22h3v3h-3zM15 22h3v3h-3z" fill="#f0d040" /><path d="M21 12h11l-10 5 9 4-9 5" stroke="#222" /></>,
    <><path d="M8 3l5 24L27 18" stroke="#c04020" /><path d="M10 12l3 15 13-9z" fill="#78aee0" /><circle cx="8" cy="3" r="2" fill="#e02020" /><circle cx="13" cy="27" r="2" fill="#e02020" /><circle cx="27" cy="18" r="2" fill="#e02020" /></>,
    <><path d="M22 5q8 0 7 7-2 6-11 6-8 2-9 8 0 5 8 4" stroke="#111" strokeWidth="1.300" /><circle cx="26" cy="29" r="3.500" stroke="#1818c0" strokeWidth="1.300" /><circle cx="26" cy="29" r="1" fill="#1818c0" /></>,
  ]},
]

const penIcons = [
  <path d="M3 5h16v12H3z" stroke="#fff" strokeWidth="1.200" />,
  <path d="M3 4h16M11 4v15" stroke="#fff" strokeWidth="1.200" />,
  <path d="M3 3l17 17" stroke="#fff" />,
  <path d="M2 13q5-8 9-2t9 0" stroke="#fff" strokeWidth="1.200" />,
  <><path d="M2 12l5-6 7 11 6-7" stroke="#eee" /><path d="M7 6l7 11" stroke="#d02020" strokeWidth="1.500" /><path d="M18 4l-5 5M13 5v4h4" stroke="#38d048" strokeWidth="1.400" /></>,
  <><path d="M3 9h8M7 5v8" stroke="#38d048" strokeWidth="1.300" /><path d="M14 9h6" stroke="#38d048" strokeWidth="1.300" /><path d="M3 15h7" stroke="#fff" /><path d="M12 15h8" stroke="#d02020" strokeDasharray="1 1" /></>,
  <><path d="M7 3v16M15 3v16M7 11h8" stroke="#fff" /><path d="M2 11h4M16 11h4" stroke="#38d048" strokeDasharray="1 1" /></>,
  <><path d="M15 2v10" stroke="#fff" strokeWidth="1.200" /><path d="M2 17h9" stroke="#fff" strokeWidth="1.200" /><path d="M12 17h4M15 13v4" stroke="#38d048" strokeDasharray="1 1" /></>,
]

const sizes = Array.from({ length: 31 }, (_, i) => i)
const sizeProps = { 4: { $bg: '#fff', label: 'S' }, 5: { $bg: '#fff', $fg: '#2030c0', $outline: true, label: 'M*' }, 6: { $bg: '#e3c060', label: 'L' }, 7: { $bg: '#4a66cc', $fg: '#111', label: 'XL' } }

function spiralPath() {
  const cx = 1401, cy = 546.5, r0 = 40.7, pitch = 82
  const pts = []
  for (let t = 0; t <= 3.792; t += 0.004) {
    const a = t * Math.PI * 2
    const r = r0 + pitch * t
    pts.push(`${(cx + r * Math.cos(a)).toFixed(1)} ${(cy - r * Math.sin(a)).toFixed(1)}`)
  }
  return 'M' + pts.join('L')
}

const Penguin = ({ badge }) => (
  <Svg s={20}>
    <ellipse cx="10" cy="10" rx="6" ry="8" fill="#111" />
    <ellipse cx="10" cy="13" rx="4" ry="5" fill="#fff" />
    <path d="M5 11q5 3 10 0l-1 3H6z" fill="#d81818" />
    <path d="M8 7h4l-2 2z" fill="#f0a010" />
    <path d="M5 18h4M11 18h4" stroke="#f0a010" strokeWidth="2" />
    {badge && <rect x="11" y="11" width="9" height="7" rx="1" fill="#f0a020" />}
  </Svg>
)

export default function App() {
  return (
    <Page>
      <Global />
      <TitleBar>
        <Svg s={16}><rect x="1" y="2" width="13" height="13" fill="#3a3ae0" /><rect x="3" y="4" width="9" height="9" fill="#eee" /><path d="M7 9l6-8 2 2-6 8z" fill="#d02020" /><path d="M1 15l6-4 1 4z" fill="#f0e010" /></Svg>
        BUYI_TECHNOLOGY - [F:\课程录像\基础知识课程\ET2020软件教程\1021.低腰弹力喇叭裤纸样.prj----样板号: 1021.低腰弹力喇叭裤纸样]
        <WindowButtons>
          <Svg w={11} h={11}><path d="M0 5.500h11" stroke="#888" /></Svg>
          <Svg w={11} h={11}><path d="M0.500 3h7v7.500h-7zM3 3V.5h7.500V8H8" stroke="#888" /></Svg>
          <Svg w={12} h={12}><path d="M1 1l10 10M11 1L1 11" stroke="#888" /></Svg>
        </WindowButtons>
      </TitleBar>
      <MenuBar>
        <Svg w={14} h={14}><rect x=".5" y=".5" width="13" height="13" fill="#ddd" stroke="#999" /><rect x="2" y="3" width="5" height="9" fill="#447" /><rect x="8" y="3" width="4" height="9" fill="#eee" /></Svg>
        <MenuList>{menus.map(m => <span key={m}>{m}</span>)}</MenuList>
        <MdiButtons>
          <MdiButton><Svg w={8} h={8}><path d="M1 6.500h6" stroke="#666" strokeWidth="2" /></Svg></MdiButton>
          <MdiButton><Svg w={10} h={10}><path d="M1 4h5v5H1zM3 4V1h6v5H6" stroke="#666" /></Svg></MdiButton>
          <MdiButton><Svg w={10} h={10}><path d="M2 2l6 6M8 2L2 8" stroke="#666" strokeWidth="2" /></Svg></MdiButton>
        </MdiButtons>
      </MenuBar>
      <Toolbar>
        <ToolIcons>
          {toolIcons.map((ic, i) => ic === 'sep' ? <ToolSep key={i} /> : ic === 'big' ? <ToolIcon key={i}><BigGlyph>设</BigGlyph></ToolIcon> : <ToolIcon key={i}>{ic}</ToolIcon>)}
        </ToolIcons>
        <DarkTools>
          <Combo>智能模式F5<ComboArrow /></Combo>
          <TanInput $w={44} $ml={4}>0</TanInput>
          <GrayToggle><Svg s={16}><rect x="2" y="3" width="11" height="10" fill="#fff" stroke="#11116a" /><path d="M6 1l3 14" stroke="#d02020" /></Svg></GrayToggle>
          <WidthLabel>线宽</WidthLabel>
          <TanInput $w={42} $ml={0}>2</TanInput>
        </DarkTools>
      </Toolbar>
      <PoiBox>
        <PoiTitle>Poi...<PoiClose /></PoiTitle>
        <StartButton>Start</StartButton>
      </PoiBox>
      <Body>
        <Work>
          <StatusBar>
            <StatusDark>
              <StatusIcon>
                <Svg w={25} h={24}><path d="M3 22L21 3" stroke="#e02020" strokeWidth="5" /><path d="M3 22l7-7" stroke="#fff" strokeWidth="3" /><path d="M2 14l6 6M2 18l4 4" stroke="#fff" /></Svg>
              </StatusIcon>
              <StatusKey>变更线宽</StatusKey>：请先输入线宽，选择目标要素，右键结束选择...
            </StatusDark>
          </StatusBar>
          <Canvas>
            <SpiralLayer viewBox="0 98 1776 918">
              <path d={spiralPath()} fill="none" stroke="#ee22ee" strokeWidth="2" />
              <path d="M1442 547H1524" stroke="#ee22ee" strokeWidth="1.200" />
              <path d="M1471 806l22 78" stroke="#bbb" strokeWidth="1.200" />
              <path d="M1065 275v57l13-13 9 21 8-4-8-19 18-1z" fill="#ff2a85" />
            </SpiralLayer>
            <Headline>42.螺旋操作<br />ET2020软件教程</Headline>
            <LeftStrip>
              {leftIcons.map((ic, i) => (
                <StripButton key={i} $black={blackLeft.includes(i)}>
                  <Svg w={30} h={24}>{ic.map((el, j) => <React.Fragment key={j}>{el}</React.Fragment>)}</Svg>
                </StripButton>
              ))}
            </LeftStrip>
            <PenPanel>
              <PenTitle>智能笔分类工具条<PenClose /></PenTitle>
              <PenTools>{penIcons.map((ic, i) => <PenTool key={i}><Svg s={22}>{ic}</Svg></PenTool>)}</PenTools>
            </PenPanel>
            <Player>
              <PlayTriangle />
              <TimeNow>00:00:00:00</TimeNow>
              <TimeAll>00:03:04:10</TimeAll>
              <Knob />
              <Track />
              <Quality>画质</Quality>
              <Caret />
              <Svg w={40} h={16}><path d="M27 2l5 5M32 3v4h-4M38 13l-5-5M33 12V8h4" stroke="#bbb" strokeWidth="1.300" /></Svg>
            </Player>
          </Canvas>
        </Work>
        <Panel>
          <PanelHead>
            <Svg w={141} h={60}>
              <path d="M27 27v3h105v-3M59 27v3M91 27v3" stroke="#d9b36c" />
              {[14, 46, 78, 110].map(x => <rect key={x} x={x} y="5" width="21" height="23" fill="#333" stroke="#d9b36c" />)}
              <path d="M18 17l6-3h8v7h-8z" fill="#e83020" /><path d="M18 17l6-3v7z" fill="#ddd" />
              <rect x="49" y="8" width="15" height="17" fill="#2020e0" /><path d="M49 16h5l4 5h6v4H49z" fill="#e81818" /><path d="M49 15h6l4 5h5" stroke="#fff" />
              <circle cx="83" cy="11" r="3" fill="#e8a0a0" /><circle cx="90" cy="19" r="6" fill="#3050d0" />
              <path d="M115 8h10v6h4v4h-17v-4h3z" fill="#3030e0" stroke="#fff" strokeWidth=".5" /><path d="M113 20h14v6h-14z" fill="#e03030" />
              <defs><linearGradient id="bl" x1="0" y1="0" x2="0" y2="1"><stop offset="0" stopColor="#f8d898" /><stop offset=".5" stopColor="#c89040" /><stop offset="1" stopColor="#6a4818" /></linearGradient></defs>
              <path d="M25 43l10-2h2l4-3h70q3 0 3 5t-3 5H41l-4-3z" fill="url(#bl)" />
              <path d="M92 38v10" stroke="#3a2008" />
            </Svg>
            <Svg w={141} h={26}>
              <defs><linearGradient id="bb"><stop offset="0" stopColor="#1f6be0" /><stop offset=".25" stopColor="#0a2a70" /><stop offset=".5" stopColor="#000" /><stop offset=".75" stopColor="#0a2a70" /><stop offset="1" stopColor="#1f6be0" /></linearGradient></defs>
              <path d="M0 .5h141" stroke="#c49a50" />
              <rect y="1" width="141" height="21" fill="url(#bb)" />
              <path d="M0 22.500h141" stroke="#c49a50" strokeWidth="2" />
              <text x="70" y="15" fill="#f0b040" fontSize="11.500" textAnchor="middle" fontFamily="Liberation Mono, monospace">www.etsystem.cn</text>
            </Svg>
          </PanelHead>
          {rightGroups.map((g, gi) => (
            <React.Fragment key={gi}>
              <IconGrid>
                {g.icons.map((ic, i) => <IconCell key={i} $tone={g.tone}><Svg s={34}>{ic}</Svg></IconCell>)}
              </IconGrid>
              {gi < rightGroups.length - 1 && <Band />}
            </React.Fragment>
          ))}
          <BottomRow>
            <UnitKey>2</UnitKey>
            <UnitName>CM</UnitName>
            <Calc><Svg w={26} h={31}><rect x="1" y="2" width="24" height="29" fill="#777" stroke="#ccc" /><rect x="4" y="5" width="18" height="7" fill="#7ab0e0" /><path d="M4 15h18M4 19h18M4 23h18M4 27h18" stroke="#222" strokeWidth="2" strokeDasharray="3 1.500" /></Svg></Calc>
          </BottomRow>
          <TanBand />
          <Preview>
            <Svg w={141} h={111}>
              <path d="M6 26h10v28H6zM18 26l12-2 4 26-8 4zM38 22l14 8-10 24-6-2z" stroke="#e0a040" strokeWidth="1.300" />
              <path d="M6 26v28M15 26v28" stroke="#18c818" strokeWidth="4" strokeDasharray="6 3" />
              <path d="M20 28h14M20 40h16" stroke="#18c818" strokeWidth="5" strokeDasharray="5 2" />
              <path d="M28 24v18" stroke="#d8a040" strokeWidth="3" />
              <path d="M11 28v24" stroke="#fff" strokeDasharray="3 1" />
              <path d="M40 24v28" stroke="#18c818" strokeWidth="3" strokeDasharray="3 2" />
              <path d="M51 41h14v10H51z" fill="#f0a0f0" />
              <path d="M6 59h11l-2 28H8zM18 59h11l-2 28h-7z" fill="#18c818" />
              <path d="M11 62v24M23 62v24" stroke="#c09050" strokeWidth="2" />
              <path d="M53 59h20v27H53z" fill="#18c818" />
              <path d="M57 68v16M61 70v14M65 70v14M69 68v16" stroke="#fff" />
              <circle cx="128" cy="38" r="6.500" fill="#ff18e0" /><rect x="128" y="36" width="4" height="6" fill="#18b040" />
            </Svg>
          </Preview>
          <Coords>
            <CoordRow><span>X:</span><span>585.80</span></CoordRow>
            <CoordRow><span>Y:</span><span>163.74</span></CoordRow>
          </Coords>
          <Inset />
          <PanelFoot />
        </Panel>
      </Body>
      <LayerBar>
        <LayerButton $w={16}>S</LayerButton>
        <LayerButton $w={84} $ml={3}>显示层</LayerButton>
        <LayerButton $w={16}><Svg w={6} h={9}><path d="M5 0v9L0 4.500z" fill="#000" /></Svg></LayerButton>
        <LayerButton $w={7} $ml={3} />
        <LayerButton $w={16} $ml={8}><Svg w={6} h={9}><path d="M1 0v9l5-4.500z" fill="#000" /></Svg></LayerButton>
        <LayerButton $w={28}>全部</LayerButton>
        <SizeCells>
          {sizes.map(i => <SizeCell key={i} {...sizeProps[i]}>{sizeProps[i] && sizeProps[i].label}</SizeCell>)}
        </SizeCells>
        <LayerButton $w={28} $ml={3}>L</LayerButton>
        <LayerButton $w={28}>R</LayerButton>
      </LayerBar>
      <Taskbar>
        <TaskSlot $w={47}><Svg s={16}><path d="M0 2.500l6.500-1v6H0zM7.500 1.300L16 0v7.500H7.500zM0 8.500h6.500v6L0 13.500zM7.500 8.500H16V16l-8.500-1.300z" fill="#000" /></Svg></TaskSlot>
        <TaskSlot $w={50}><Svg s={17}><path d="M2 1h10M2 15h10" stroke="#000" /><rect x="2.500" y="5" width="10" height="6" stroke="#000" /><path d="M15.500 1v2M15.500 5v2M15.500 9v2" stroke="#000" /></Svg></TaskSlot>
        <TaskSlot $open><Svg s={26}><path d="M2 4h9l2 2h11v17H2z" fill="#f0c860" /><rect x="2" y="3" width="9" height="3" fill="#d8a030" /><path d="M8 16h10v7H8z" fill="#2f7fd4" /><path d="M11 18h4v5h-4z" fill="#f0c860" /></Svg></TaskSlot>
        <TaskSlot $open><Svg s={26}><path d="M8 3l15 3-4 18-15-4z" fill="#a8cfe8" stroke="#777" /><path d="M19 6l3-1-4 19z" fill="#555" /></Svg></TaskSlot>
        <TaskSlot $open><Svg s={28}><rect x="3" y="2" width="22" height="24" fill="#f0f0ff" stroke="#2828d0" strokeWidth="2" /><path d="M10 19L24 3l2 2-14 15z" fill="#d02020" /><path d="M2 27l12-5-6-3 7-2-4-1-9 5z" fill="#f0e010" /></Svg></TaskSlot>
        <TaskSlot $open><Svg s={28}><rect x="2" y="2" width="24" height="25" rx="2" fill="#a8d8a0" /><path d="M2 2h13v12H2z" fill="#88b8e0" /><path d="M2 14h13v13H2z" fill="#f8d8b0" /><path d="M4 3l11 11" stroke="#b02040" strokeWidth="3" /><circle cx="13" cy="14" r="3" fill="#d82020" /><path d="M15 15v12l3-3 4 3-2-5 3-1z" fill="#fff" stroke="#000" /></Svg></TaskSlot>
        <TaskSlot $open><Svg s={28}><ellipse cx="11" cy="13" rx="9" ry="8" fill="#22c840" /><circle cx="8" cy="11" r="1.200" fill="#145" /><circle cx="14" cy="11" r="1.200" fill="#145" /><ellipse cx="20" cy="18" rx="7" ry="6.500" fill="#eee" /></Svg></TaskSlot>
        <Tray>
          <TrayIcon><Svg w={14} h={9}><path d="M1 8l6-6 6 6" stroke="#222" strokeWidth="1.300" /></Svg></TrayIcon>
          <TrayIcon><Svg s={18}><ellipse cx="7" cy="8" rx="6" ry="5" fill="#22c840" /><ellipse cx="13" cy="12" rx="5" ry="4" fill="#eee" /></Svg></TrayIcon>
          <TrayIcon><Svg s={18}><rect x="1" y="3" width="16" height="12" fill="#18c818" /><path d="M5 3v12M9 4v11M13 3v12" stroke="#2020c0" strokeWidth="2" /><path d="M7 6l4 6" stroke="#d02020" strokeWidth="2" /></Svg></TrayIcon>
          <TrayIcon><Penguin badge /></TrayIcon>
          <TrayIcon><Penguin /></TrayIcon>
          <TrayIcon><Svg s={18}><path d="M2 7h3l4-4v12l-4-4H2z" stroke="#222" /><path d="M11 6q2 3 0 6M14 4q3 5 0 10" stroke="#222" /></Svg></TrayIcon>
          <TrayIcon><Svg s={16}><rect x="2" y="4" width="12" height="7" stroke="#333" /><path d="M8 1v14" stroke="#333" /></Svg></TrayIcon>
          <TrayIcon><Svg s={20}><rect x="2" y="2" width="16" height="16" rx="3" fill="#f2642a" transform="rotate(-8 10 10)" /><path d="M14 6H8L6 9l7 1-1 3H6" stroke="#fff" strokeWidth="2.200" /></Svg></TrayIcon>
          <Clock>22:05<br />2022/9/17</Clock>
          <Notify>
            <Svg w={34} h={30}>
              <path d="M7 5h16v13h-6l-2 3-2-3H7z" fill="#000" />
              <path d="M10 9h10M10 12h10M10 15h6" stroke="#fff" />
              <circle cx="23" cy="20" r="7.500" fill="#d4d4d4" stroke="#555" />
              <text x="23" y="24" fontSize="11" fontWeight="700" textAnchor="middle" fill="#222" fontFamily="Liberation Sans">2</text>
            </Svg>
          </Notify>
        </Tray>
      </Taskbar>
    </Page>
  )
}
